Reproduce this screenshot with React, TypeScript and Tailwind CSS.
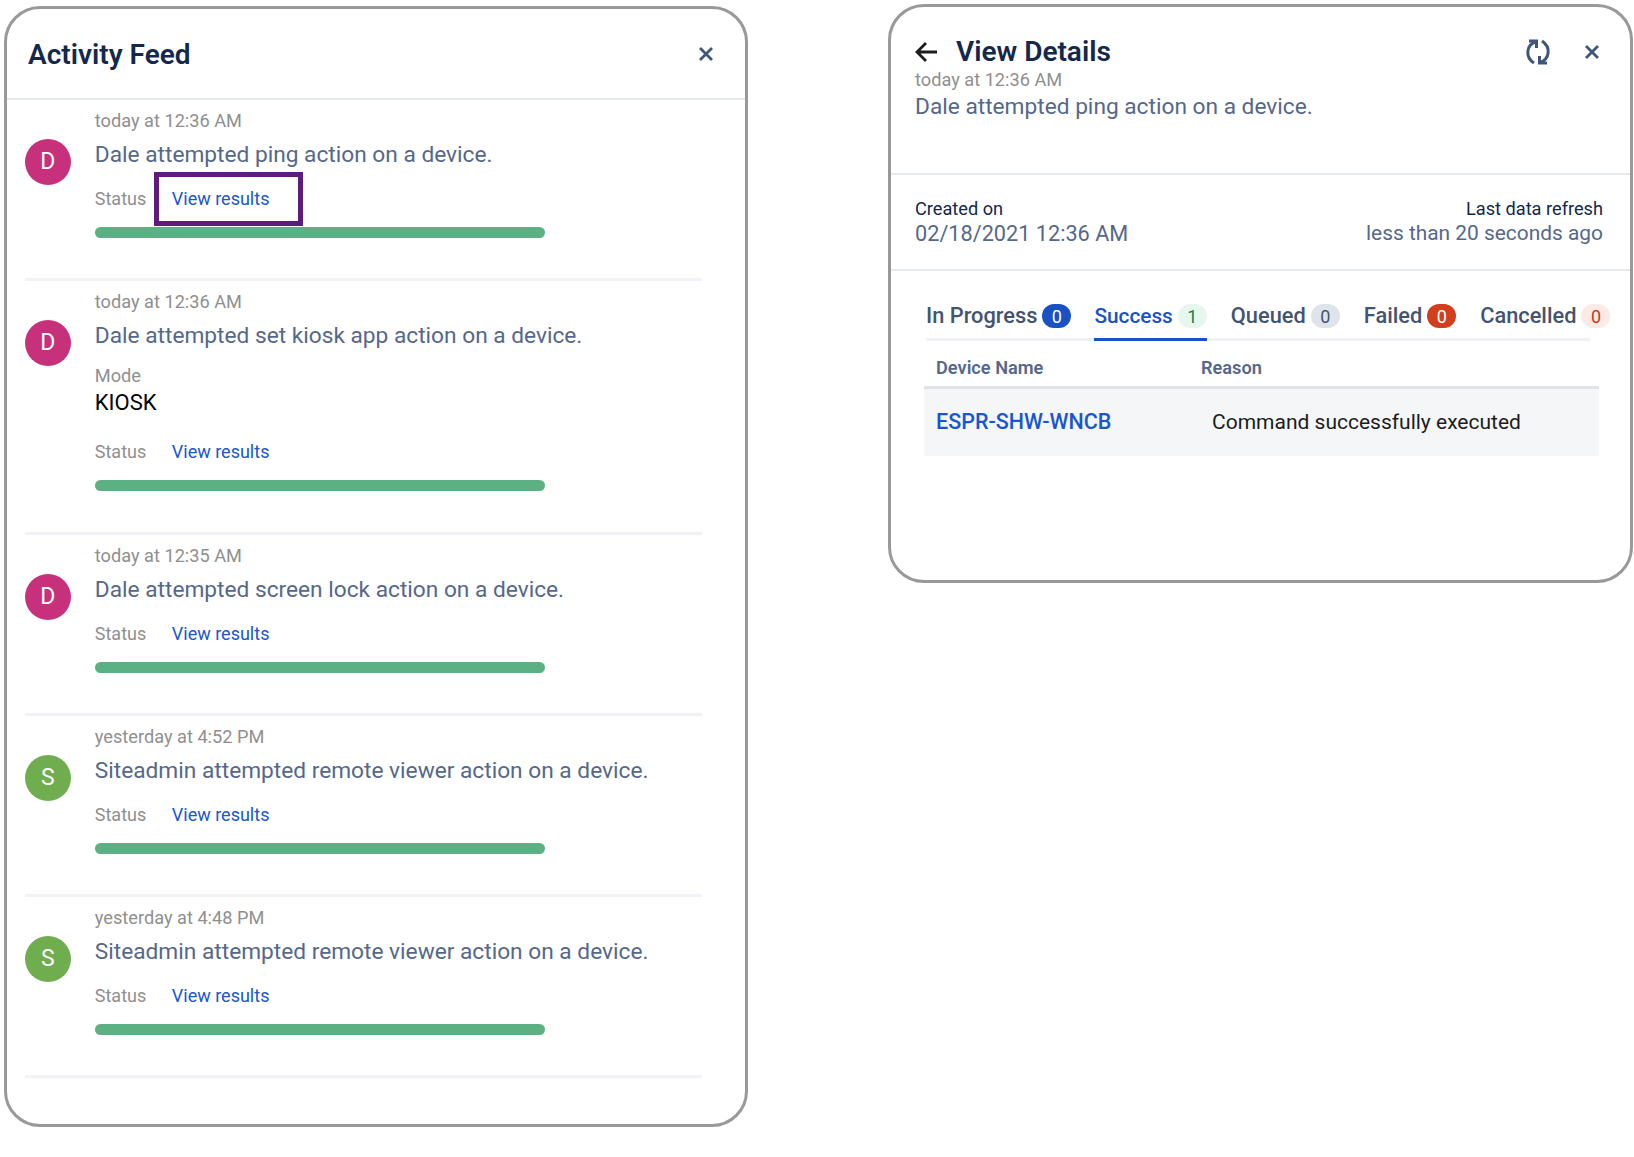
const font = "font-['Roboto','Liberation_Sans',sans-serif]"

interface Activity {
  time: string
  message: string
  initial: string
  avatar: string
  kiosk?: boolean
  focused?: boolean
}

const activities: Activity[] = [
  { time: 'today at 12:36 AM', message: 'Dale attempted ping action on a device.', initial: 'D', avatar: 'bg-[#c7317c]', focused: true },
  { time: 'today at 12:36 AM', message: 'Dale attempted set kiosk app action on a device.', initial: 'D', avatar: 'bg-[#c7317c]', kiosk: true },
  { time: 'today at 12:35 AM', message: 'Dale attempted screen lock action on a device.', initial: 'D', avatar: 'bg-[#c7317c]' },
  { time: 'yesterday at 4:52 PM', message: 'Siteadmin attempted remote viewer action on a device.', initial: 'S', avatar: 'bg-[#70ad4f]' },
  { time: 'yesterday at 4:48 PM', message: 'Siteadmin attempted remote viewer action on a device.', initial: 'S', avatar: 'bg-[#70ad4f]' },
]

const tabs = [
  { label: 'In Progress', count: 0, badge: 'bg-[#1a52c4] text-white' },
  { label: 'Success', count: 1, badge: 'bg-[#e6f8ee] text-[#2a7a4b]', active: true },
  { label: 'Queued', count: 0, badge: 'bg-[#dfe3ea] text-[#44546f]' },
  { label: 'Failed', count: 0, badge: 'bg-[#d13f1c] text-white' },
  { label: 'Cancelled', count: 0, badge: 'bg-[#fbeae6] text-[#c8381a]' },
]

function CloseIcon() {
  return (
    <svg width="16" height="16" viewBox="0 0 16 16" fill="none" stroke="#3f5678" strokeWidth="2.8">
      <path d="M2 2l12 12M14 2L2 14" />
    </svg>
  )
}

function RefreshIcon() {
  return (
    <svg width="26" height="26" viewBox="0 0 26 26" fill="none" stroke="#3f5678" strokeWidth="3">
      <path d="M11 2.5C1 6 0 18 9 24" />
      <path d="M4 2H11.5V9" />
      <path d="M15 23.5C25 20 26 8 17 2" />
      <path d="M22 24H14.5V17" />
    </svg>
  )
}

function ActivityRow({ item }: { item: Activity }) {
  return (
    <div className={`flex border-b-[3px] border-[#f1f2f5] ml-[18px] w-[677px] ${item.kiosk ? 'h-[254px]' : 'h-[181px]'}`}>
      <div className={`flex items-center justify-center w-[46px] h-[46px] rounded-full mt-[39px] text-white text-[23px] ${item.avatar}`}>
        {item.initial}
      </div>
      <div className="ml-[24px] w-[610px] pt-[9px]">
        <div className="text-[18.2px] leading-[24px] text-[#8f8f8f]">{item.time}</div>
        <div className="text-[22.7px] leading-[30px] mt-[7px] text-[#55688a]">{item.message}</div>
        {item.kiosk && (
          <div className="mt-[13px] mb-[13px]">
            <div className="text-[18.2px] leading-[24px] text-[#8f8f8f]">Mode</div>
            <div className="text-[22px] leading-[28px] mt-[1px] text-black">KIOSK</div>
          </div>
        )}
        <div className={`flex items-center text-[18px] leading-[24px] ${item.kiosk ? 'mt-[23px]' : 'mt-[17px]'}`}>
          <span className="w-[77px] text-[#8f8f8f]">Status</span>
          <span className="relative text-[#1a56cf]">
            View results
            {item.focused && (
              <span className="absolute left-[-18px] top-[-15px] w-[149px] h-[54px] border-[5px] border-[#5f1a7d]" />
            )}
          </span>
        </div>
        <div className="w-[450px] h-[11px] rounded-full bg-[#5bb184] mt-[16px]" />
      </div>
    </div>
  )
}

export default function App() {
  return (
    <div className={`flex items-start w-[1634px] h-[1157px] bg-white ${font}`}>
      {/* Activity feed panel */}
      <div className="w-[744px] h-[1121px] ml-[4px] mt-[6px] border-[3px] border-[#999999] rounded-[36px] bg-white">
        <div className="flex items-center justify-between h-[91px] pl-[21px] pr-[31px] border-b-2 border-[#e6eaec]">
          <h1 className="mt-[2px] text-[28px] font-semibold text-[#14284b]">Activity Feed</h1>
          <CloseIcon />
        </div>
        {activities.map((item, i) => (
          <ActivityRow key={i} item={item} />
        ))}
      </div>

      {/* Details panel */}
      <div className="w-[745px] h-[579px] ml-[140px] mt-[4px] border-[3px] border-[#999999] rounded-[36px] bg-white">
        <div className="h-[168px] border-b-2 border-[#e6eaec] pt-[25px]">
          <div className="flex items-center pl-[24px] pr-[30px] h-[40px]">
            <svg width="22" height="22" viewBox="0 0 22 22" fill="none" stroke="#1c1c1c" strokeWidth="2.8">
              <path d="M22 11H2M11 2L2 11l9 9" />
            </svg>
            <h2 className="ml-[19px] text-[28px] font-semibold text-[#14284b]">View Details</h2>
            <div className="ml-auto"><RefreshIcon /></div>
            <div className="ml-[33px]"><CloseIcon /></div>
          </div>
          <div className="pl-[24px] text-[18.2px] leading-[22px] text-[#8f8f8f] mt-[-3px]">today at 12:36 AM</div>
          <div className="pl-[24px] text-[22.7px] leading-[30px] mt-[1px] text-[#55688a]">Dale attempted ping action on a device.</div>
        </div>

        <div className="flex justify-between h-[96px] pl-[24px] pr-[27px] pt-[23px] border-b-2 border-[#e6eaec]">
          <div>
            <div className="text-[18.2px] leading-[22px] text-[#14284b]">Created on</div>
            <div className="text-[21.7px] leading-[27px] text-[#55688a]">02/18/2021 12:36 AM</div>
          </div>
          <div className="text-right">
            <div className="text-[18.2px] leading-[22px] text-[#14284b]">Last data refresh</div>
            <div className="text-[20.9px] leading-[27px] text-[#55688a]">less than 20 seconds ago</div>
          </div>
        </div>

        <div className="flex w-[664px] ml-[35px] mt-[30px] h-[40px] border-b-[3px] border-[#eff1f4]">
          {tabs.map((tab) => (
            <div
              key={tab.label}
              className={`flex items-start h-[40px] pt-[3px] mr-[24px] first:mr-[23px] shrink-0 ${tab.active ? 'border-b-[3px] border-[#1a52c4]' : ''}`}
            >
              <span className={`leading-[24px] font-medium ${tab.active ? 'text-[20.8px] text-[#1a52c4]' : 'text-[21.8px] text-[#44546f]'}`}>
                {tab.label}
              </span>
              <span className={`flex items-center justify-center w-[29px] h-[24px] ml-[5px] rounded-full text-[18px] ${tab.badge}`}>
                {tab.count}
              </span>
            </div>
          ))}
        </div>

        <div className="w-[675px] ml-[33px]">
          <div className="flex items-center h-[48px] pt-[9px] border-b-[3px] border-[#dfe2e7] text-[18.2px] font-semibold text-[#55688a]">
            <span className="w-[277px] pl-[12px]">Device Name</span>
            <span>Reason</span>
          </div>
          <div className="flex items-center h-[67px] bg-[#f5f6f8] text-[21px]">
            <span className="w-[288px] pl-[12px] text-[21.5px] font-medium text-[#1a56cf]">ESPR-SHW-WNCB</span>
            <span className="text-[#1c1c1c]">Command successfully executed</span>
          </div>
        </div>
      </div>
    </div>
  )
}
